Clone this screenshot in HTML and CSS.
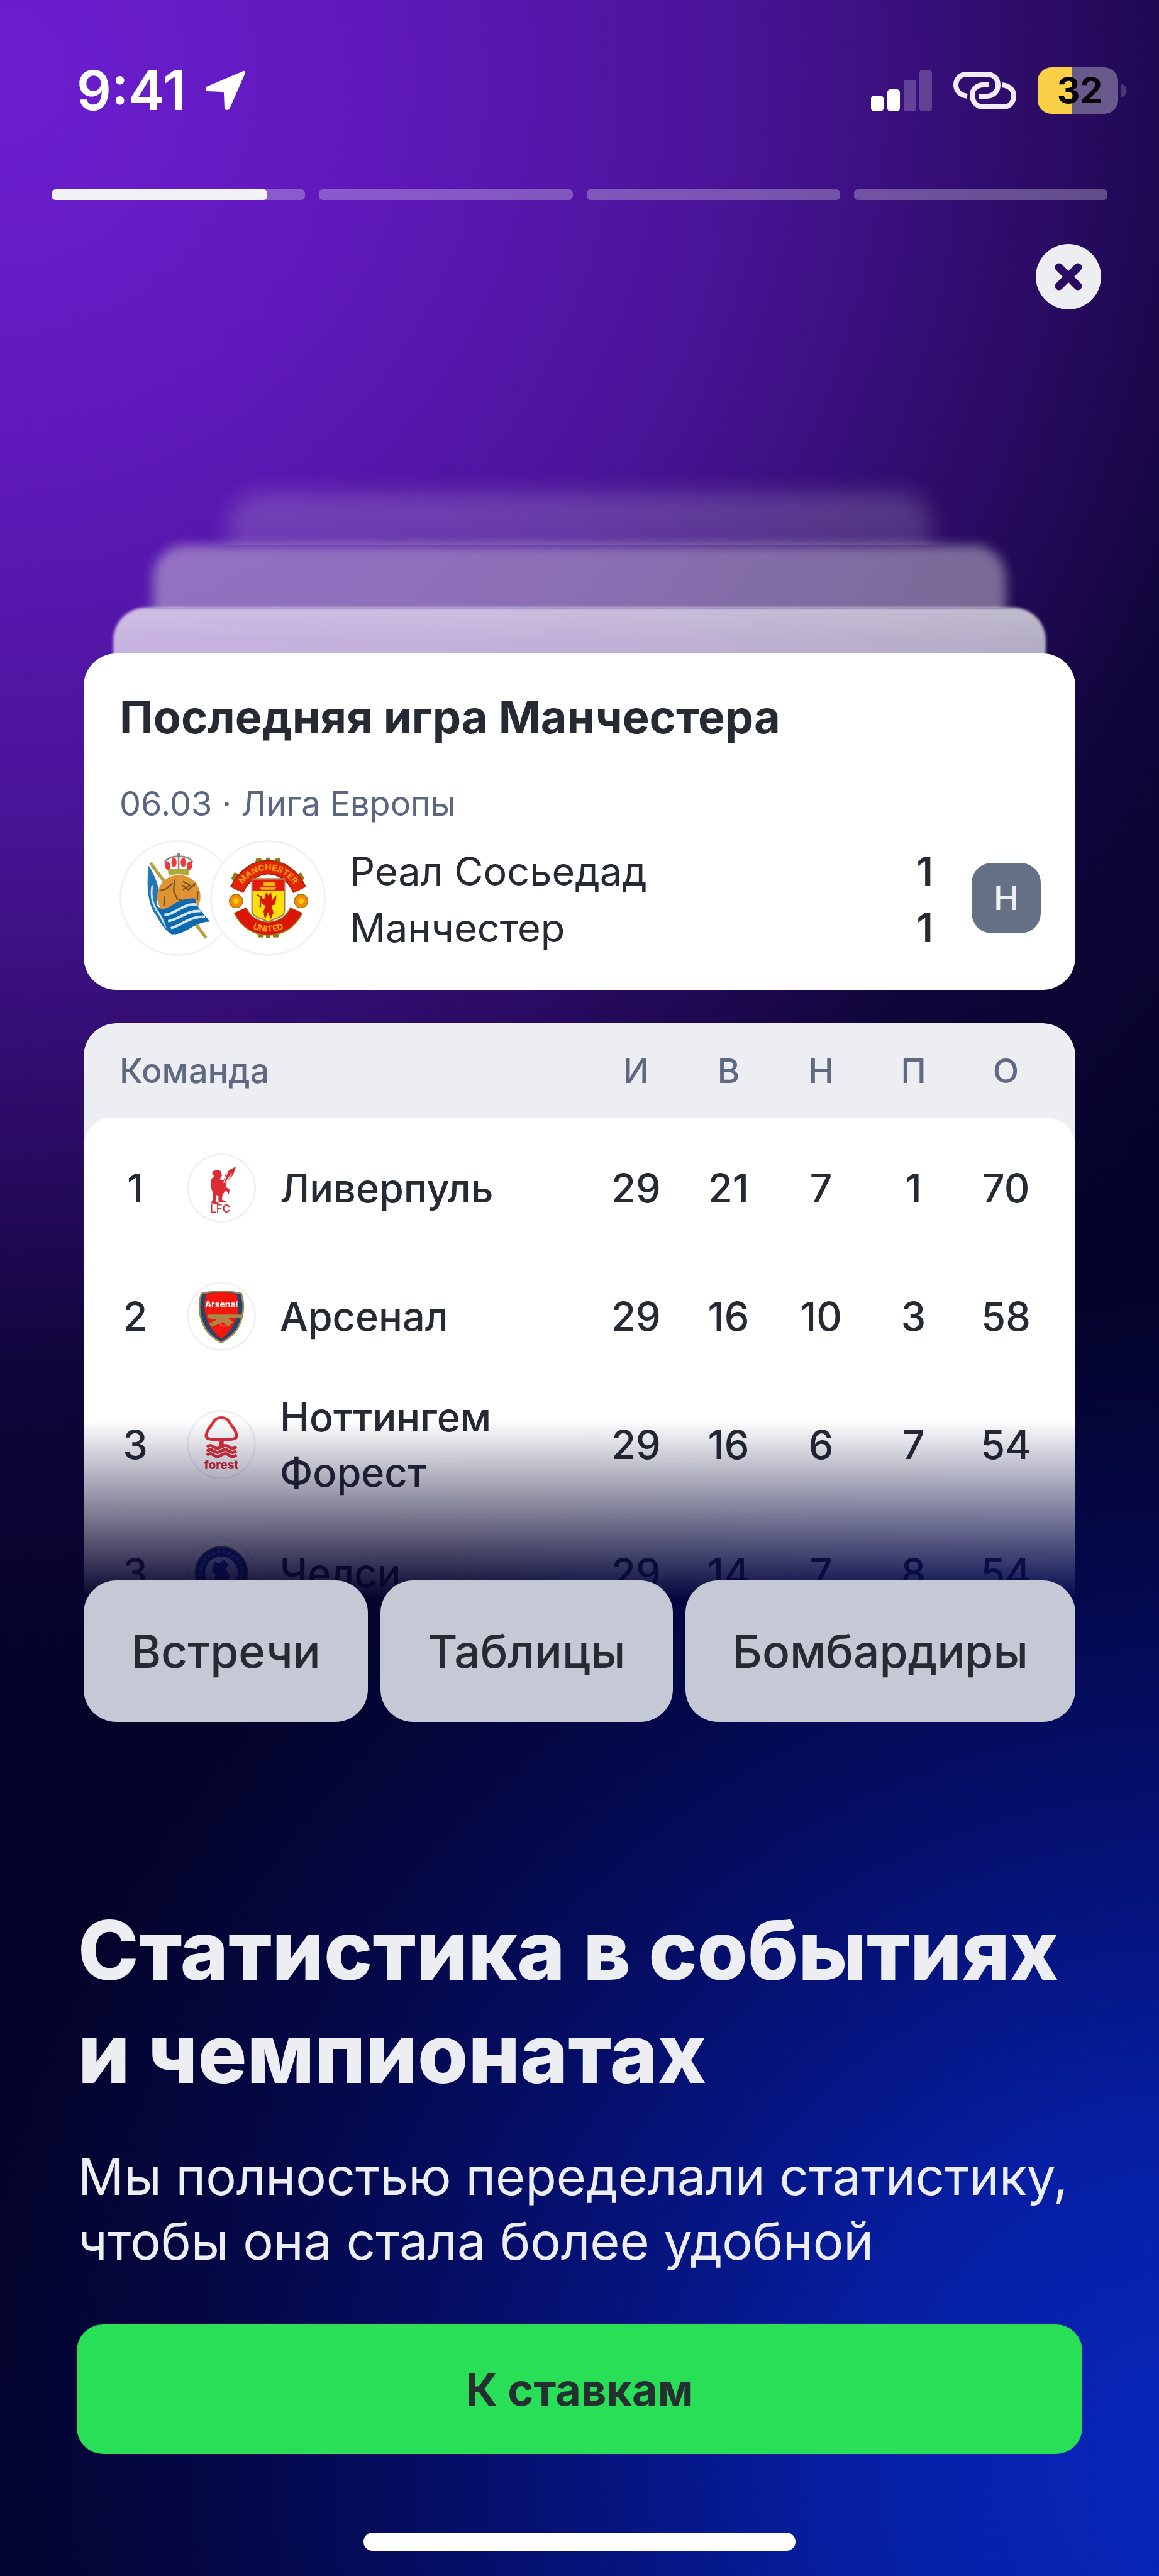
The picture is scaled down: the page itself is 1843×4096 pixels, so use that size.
FILE: index.html
```
<!DOCTYPE html>
<html lang="ru">
<head>
  <meta charset="UTF-8">
  <meta name="viewport" content="width=device-width, initial-scale=1.0">
  <title>Статистика в событиях и чемпионатах</title>
  <link rel="stylesheet" href="styles.css">
</head>
<body>
<div class="story">

  <!-- Статус-бар -->
  <header class="status-bar">
    <div class="status-left">
      <span class="time">9:41</span>
      <svg class="icon-location" viewBox="0 0 66 66">
        <path d="M62 2 L3 27 Q0 31 4 34 L29 35 Q31 35 31 38 L32 62 Q36 66 40 62 L65 5 Q65 1 62 2Z" fill="#fff"/>
      </svg>
    </div>
    <div class="status-right">
      <svg class="icon-signal" viewBox="0 0 97 66" fill="#fff">
        <rect x="0" y="41" width="20" height="25" rx="5"/>
        <rect x="26" y="31" width="20" height="35" rx="5"/>
        <rect x="52" y="16" width="20" height="50" rx="5" opacity=".22"/>
        <rect x="77" y="0" width="20" height="66" rx="5" opacity=".22"/>
      </svg>
      <svg class="icon-link" viewBox="0 0 100 62" fill="none" stroke="#f1ecf8" stroke-width="8">
        <path d="M22 40 C10 38 4 31 4 22 C4 12 12 5 21 5 H53 C64 5 71 12 71 22 C71 33 63 40 53 40 H41"/>
        <path d="M57 22 H48 C37 22 30 29 30 38 C30 50 38 57 48 57 H80 C90 57 96 49 96 39 C96 30 89 23 77 22"/>
      </svg>
      <div class="battery">
        <div class="battery-body"><span>32</span></div>
        <div class="battery-cap"></div>
      </div>
    </div>
  </header>

  <div class="progress">
    <div class="segment"><div class="segment-fill" style="width: 85%"></div></div>
    <div class="segment"></div>
    <div class="segment"></div>
    <div class="segment"></div>
  </div>

  <button class="close" type="button" aria-label="Закрыть">
    <svg viewBox="0 0 104 104" stroke="#290b63" stroke-width="13" stroke-linecap="round">
      <path d="M37 37 L67 67 M67 37 L37 67"/>
    </svg>
  </button>

  <main class="cards">
    <!-- Стопка карточек позади -->
    <div class="layer layer-far"></div>
    <div class="layer layer-middle"></div>
    <div class="layer layer-near"></div>

    <section class="match">
      <h2>Последняя игра Манчестера</h2>
      <p class="match-info">06.03 · Лига Европы</p>
      <div class="match-row">
        <div class="crests">
          <!-- Реал Сосьедад -->
          <svg class="crest" viewBox="68 88 604 604">
            <path d="M225 200 L525 605" stroke="#b9a23e" stroke-width="17"/>
            <path d="M215 215 C240 255 262 300 270 345 L258 430 L320 470 L345 585 C295 570 270 500 240 460 C205 390 205 300 215 215Z" fill="#2178b8"/>
            <path d="M236 320 C222 380 235 430 275 480 M262 460 C290 500 300 540 330 570 M290 455 C320 500 315 540 340 570" fill="none" stroke="#cfe3f2" stroke-width="10"/>
            <circle cx="378" cy="382" r="117" fill="#e09332"/>
            <path d="M275 350 L310 340 L345 310 M355 290 L350 350 L372 400 M300 380 L298 430 M395 320 L430 345 L470 310 M400 300 L445 325 M400 345 L440 320 M380 400 L410 405 M480 350 L478 400" fill="none" stroke="#7b5420" stroke-width="8"/>
            <path d="M265 455 C340 450 370 385 465 392 C472 440 510 470 545 517 C450 520 420 590 340 585 C300 570 310 500 265 455Z" fill="#0e6ab0"/>
            <path d="M300 480 C360 480 400 415 475 425 M320 515 C380 505 420 455 495 460 M335 552 C400 535 430 490 520 490" fill="none" stroke="#d5e6f3" stroke-width="13"/>
            <path d="M325 270 C315 240 320 235 335 232 H420 C435 235 438 240 428 270 C395 258 355 258 325 270Z" fill="#a9ab3d"/>
            <g fill="#ee3a3a">
              <ellipse cx="318" cy="215" rx="15" ry="24" transform="rotate(-14 318 215)"/>
              <ellipse cx="352" cy="198" rx="14" ry="26"/>
              <ellipse cx="402" cy="198" rx="14" ry="26"/>
              <ellipse cx="436" cy="215" rx="15" ry="24" transform="rotate(14 436 215)"/>
            </g>
            <path d="M302 195 C330 155 425 155 452 195 M377 155 V235" fill="none" stroke="#97857a" stroke-width="9"/>
            <circle cx="377" cy="158" r="10" fill="#8d7a92"/>
          </svg>
          <!-- Манчестер -->
          <svg class="crest" viewBox="546 88 604 604">
            <g fill="#8f7a10">
              <path d="M785 176 h26 l8 26 h-40z M890 176 h26 l-4 30 h-34z M838 172 h24 v26 h-24z"/>
              <path d="M650 285 l18 -34 l28 12 l-22 42z M1045 285 l-18 -34 l-28 12 l22 42z"/>
              <path d="M795 602 h30 v-26 h-30z M875 602 h30 v-26 h-30z M838 607 h24 v-22 h-24z"/>
            </g>
            <path d="M680 346 C720 262 785 224 850 224 C915 224 980 262 1020 346" fill="none" stroke="#93210a" stroke-width="78"/>
            <path d="M681 344 C720 262 785 224 850 224 C915 224 980 262 1019 344" fill="none" stroke="#e32406" stroke-width="68"/>
            <path d="M698 455 C730 525 790 555 850 555 C910 555 970 525 1002 455" fill="none" stroke="#8f8a10" stroke-width="76"/>
            <path d="M699 456 C730 524 790 554 850 554 C910 554 970 524 1001 456" fill="none" stroke="#dc1508" stroke-width="66"/>
            <path id="arc-top" d="M694 350 C725 278 790 240 850 240 C910 240 975 278 1006 350" fill="none"/>
            <path id="arc-bottom" d="M700 500 C740 555 795 572 850 572 C905 572 960 555 1000 500" fill="none"/>
            <g fill="#ffa60a" font-family="Inter, sans-serif" font-weight="700" font-size="46" text-anchor="middle">
              <text><textPath href="#arc-top" startOffset="50%">MANCHESTER</textPath></text>
              <text><textPath href="#arc-bottom" startOffset="50%">UNITED</textPath></text>
            </g>
            <circle cx="676" cy="406" r="36" fill="#f58a07" stroke="#a87c08" stroke-width="5"/>
            <circle cx="676" cy="406" r="16" fill="#ffc60c"/>
            <circle cx="1027" cy="406" r="36" fill="#f58a07" stroke="#a87c08" stroke-width="5"/>
            <circle cx="1027" cy="406" r="16" fill="#ffc60c"/>
            <path d="M762 286 H938 V455 C938 495 890 495 850 520 C810 495 762 495 762 455Z" fill="#ffe10a" stroke="#a77860" stroke-width="7"/>
            <path d="M765 290 H935 V352 H765Z" fill="#e31b0b"/>
            <path d="M800 330 H895 L884 345 H812Z M825 305 H885 V325 H825Z" fill="#ffb60a"/>
            <path d="M838 360 L850 375 L865 360 L872 400 L895 372 L888 425 L868 430 L878 470 L862 505 L850 465 L832 505 L824 462 L836 430 L820 425 L800 378 L828 398Z" fill="#d91a05"/>
            <path d="M788 372 L812 384 L806 440" fill="none" stroke="#d91a05" stroke-width="8"/>
          </svg>
        </div>
        <div class="teams">
          <div class="team"><span>Реал Сосьедад</span><b>1</b></div>
          <div class="team"><span>Манчестер</span><b>1</b></div>
        </div>
        <span class="result">Н</span>
      </div>
    </section>

    <section class="standings">
      <table>
        <colgroup>
          <col class="col-place">
          <col>
          <col class="col-stat">
          <col class="col-stat">
          <col class="col-stat">
          <col class="col-stat">
          <col class="col-points">
        </colgroup>
        <thead>
          <tr>
            <th class="th-team" colspan="2">Команда</th>
            <th>И</th><th>В</th><th>Н</th><th>П</th><th>О</th>
          </tr>
        </thead>
        <tbody>
          <tr>
            <td>1</td>
            <td>
              <div class="club">
                <svg class="crest crest-small" viewBox="0 0 112 112" fill="#dc2b33">
                  <path d="M81 19 L76 34 L66 44 L63 54 L70 58 L69 67 L64 60 L58 67 L57 76 L66 80 L51 81 L51 69 L47 68 L46 79 L54 84 L38 82 L42 76 L42 65 L38 55 L39 40 L44 36 L40 31 L42 27 L49 25 L55 27 L57 35 L53 41 L60 43 L63 32 L70 25Z"/>
                  <path d="M67 27 L60 47 M74 31 L63 47" stroke="#fff" stroke-width="1.5"/>
                  <text x="54" y="98" font-size="18" text-anchor="middle" font-family="Inter, sans-serif">LFC</text>
                </svg>
                <span>Ливерпуль</span>
              </div>
            </td>
            <td>29</td><td>21</td><td>7</td><td>1</td><td>70</td>
          </tr>
          <tr>
            <td>2</td>
            <td>
              <div class="club">
                <svg class="crest crest-small" viewBox="0 0 112 112">
                  <path d="M22 17 C42 12 70 12 90 17 C97 38 93 60 84 76 C77 88 66 95 56 101 C46 95 35 88 28 76 C19 60 15 38 22 17Z" fill="#26446f" stroke="#a08a4c" stroke-width="3"/>
                  <path d="M30 18 C46 14 66 14 82 18 C88 40 84 56 77 70 C71 81 63 90 56 95 C49 90 41 81 35 70 C28 56 24 40 30 18Z" fill="#f3160a"/>
                  <text x="56" y="41" font-size="15" font-weight="700" fill="#fff" text-anchor="middle" font-family="Inter, sans-serif">Arsenal</text>
                  <path d="M32 53 H90 V59 H68 L76 66 L68 74 L58 66 L40 74 L34 69 L48 62 L32 59Z" fill="#a88a45"/>
                  <circle cx="60" cy="66" r="7" fill="none" stroke="#e7644c" stroke-width="2"/>
                </svg>
                <span>Арсенал</span>
              </div>
            </td>
            <td>29</td><td>16</td><td>10</td><td>3</td><td>58</td>
          </tr>
          <tr>
            <td>3</td>
            <td>
              <div class="club">
                <svg class="crest crest-small" viewBox="0 0 112 112" fill="none" stroke="#e3323a">
                  <path d="M56 10 C46 10 43 16 39 23 C34 28 31 33 30 40 C29 46 36 47 41 47 H71 C76 47 83 46 82 40 C81 33 78 28 73 23 C69 16 66 10 56 10Z" stroke-width="5"/>
                  <path d="M56 47 V62" stroke-width="8"/>
                  <path d="M31 60 Q37 55 43 60 T56 60 T69 60 T82 60 M31 67 Q37 62 43 67 T56 67 T69 67 T82 67 M31 74 Q37 69 43 74 T56 74 T69 74 T82 74" stroke-width="5"/>
                  <text x="56" y="98" font-size="20" font-weight="800" fill="#d92a38" stroke="none" text-anchor="middle" font-family="Inter, sans-serif">forest</text>
                </svg>
                <span>Ноттингем Форест</span>
              </div>
            </td>
            <td>29</td><td>16</td><td>6</td><td>7</td><td>54</td>
          </tr>
          <tr>
            <td>3</td>
            <td>
              <div class="club">
                <svg class="crest crest-small" viewBox="0 0 112 112">
                  <circle cx="56" cy="56" r="45" fill="#0b2d8c" stroke="#8a7b3c" stroke-width="2"/>
                  <circle cx="56" cy="56" r="28" fill="#b9c4ea"/>
                  <circle cx="56" cy="56" r="36" fill="none" stroke="#4a5fae" stroke-width="5" stroke-dasharray="5 4"/>
                  <path d="M44 36 L52 40 L60 34 L68 42 L64 50 L70 60 L68 76 H60 L56 64 L50 76 H42 L46 60 L40 52Z" fill="#0b2d8c"/>
                </svg>
                <span>Челси</span>
              </div>
            </td>
            <td>29</td><td>14</td><td>7</td><td>8</td><td>54</td>
          </tr>
        </tbody>
      </table>
    </section>

    <nav class="tabs">
      <button type="button">Встречи</button>
      <button type="button">Таблицы</button>
      <button type="button">Бомбардиры</button>
    </nav>
  </main>

  <section class="promo">
    <h1>Статистика в событиях<br>и чемпионатах</h1>
    <p>Мы полностью переделали статистику,<br>чтобы она стала более удобной</p>
  </section>

  <button class="cta" type="button">К ставкам</button>

  <div class="home-indicator"></div>
</div>
</body>
</html>
```
FILE: styles.css
```
* {
  box-sizing: border-box;
}

body {
  margin: 0;
  font-family: Inter, "Noto Sans", sans-serif;
  color: #262b33;
}

h1, h2, p {
  margin: 0;
}

button {
  border: none;
  font-family: inherit;
  cursor: pointer;
}

.story {
  display: flex;
  flex-direction: column;
  min-height: 100vh;
  overflow: hidden;
  background:
    radial-gradient(124% 56% at 0% 3%, #6c1fd0 0%, #6019bc 25%, #4a1499 50%, #2a0b63 74%, rgba(20, 7, 64, 0.7) 90%, rgba(6, 4, 44, 0) 110%),
    radial-gradient(108% 46% at 104% 96%, #0727bc 0%, #061fa4 28%, #051070 55%, #040848 78%, rgba(4, 4, 42, 0) 100%),
    #04032a;
}

/* Статус-бар */
.status-bar {
  display: flex;
  justify-content: space-between;
  padding: 97px 52px 0 122px;
}

.status-left,
.status-right {
  display: flex;
  align-items: center;
  gap: 34px;
  height: 94px;
}

.status-left {
  gap: 30px;
}

.time {
  font-size: 86px;
  font-weight: 600;
  line-height: 94px;
  color: #fff;
}

.icon-location {
  width: 66px;
  height: 66px;
}

.icon-signal {
  width: 97px;
  height: 66px;
}

.icon-link {
  width: 100px;
  height: 62px;
}

.battery {
  display: flex;
  align-items: center;
  gap: 5px;
}

.battery-body {
  width: 128px;
  height: 74px;
  padding-left: 6px;
  border-radius: 22px;
  background: linear-gradient(to right, #fad046 42%, #685a8b 42%);
  font-size: 57px;
  font-weight: 700;
  line-height: 74px;
  text-align: center;
  color: #07060c;
}

.battery-cap {
  width: 8px;
  height: 20px;
  border-radius: 0 8px 8px 0;
  background: #4a3874;
}

/* Прогресс истории */
.progress {
  display: flex;
  gap: 22px;
  margin-top: 110px;
  padding: 0 82px;
}

.segment {
  flex: 1;
  height: 17px;
  border-radius: 6px;
  background: rgba(237, 238, 242, 0.3);
  overflow: hidden;
}

.segment-fill {
  height: 100%;
  border-radius: 6px;
  background: #f1f2f5;
}

.close {
  align-self: flex-end;
  width: 104px;
  height: 104px;
  margin: 70px 92px 0 0;
  padding: 0;
  border-radius: 50%;
  background: #edeef2;
}

.close svg {
  display: block;
}

/* Карточки */
.cards {
  display: flex;
  flex-direction: column;
  margin-top: 293px;
  padding: 0 133px;
}

/* нижние 60px слоя срезаны и уходят под следующий */
.layer {
  align-self: center;
  margin-bottom: -60px;
  border-radius: 52px 52px 0 0;
  clip-path: inset(-80px -80px 60px -80px);
}

.layer-far {
  width: 71%;
  height: 142px;
  background: linear-gradient(rgba(220, 220, 220, 0.24), rgba(220, 220, 220, 0.17) 60%);
  filter: blur(18px);
}

.layer-middle {
  width: 86%;
  height: 159px;
  background: rgba(220, 220, 220, 0.46);
  filter: blur(9px);
}

.layer-near {
  width: 94%;
  height: 133px;
  background: linear-gradient(rgba(245, 245, 245, 0.76), rgba(250, 250, 250, 0.69) 40%);
  filter: blur(2px);
}

.match {
  position: relative;
  padding: 57px 55px 54px 57px;
  border-radius: 52px;
  background: #fff;
}

.match h2 {
  font-size: 72px;
  font-weight: 700;
  line-height: 88px;
}

.match-info {
  margin-top: 60px;
  font-size: 54px;
  line-height: 68px;
  color: #5b6680;
}

.match-row {
  display: flex;
  align-items: center;
  margin-top: 24px;
}

.crests {
  display: flex;
}

.crest {
  flex: none;
  width: 184px;
  height: 184px;
  border: 3px solid #eff1f5;
  border-radius: 50%;
  background: #fff;
}

.crest + .crest {
  margin-left: -40px;
}

.crest-small {
  width: 110px;
  height: 110px;
}

.teams {
  flex: 1;
  margin: 0 61px 0 38px;
  padding-top: 4px;
}

.team {
  display: flex;
  justify-content: space-between;
  font-size: 63px;
  line-height: 90px;
}

.team b {
  font-weight: 600;
}

.result {
  width: 110px;
  height: 112px;
  border-radius: 32px;
  background: #677185;
  font-size: 54px;
  font-weight: 500;
  line-height: 112px;
  text-align: center;
  color: #edeef2;
}

/* Таблица */
.standings {
  margin-top: 53px;
  border-radius: 52px 52px 0 0;
  background: #edeef2;
  overflow: hidden;
  -webkit-mask-image: linear-gradient(#000 632px, transparent 915px);
  mask-image: linear-gradient(#000 632px, transparent 915px);
}

table {
  width: 100%;
  table-layout: fixed;
  border-collapse: separate;
  border-spacing: 0;
}

.col-place {
  width: 164px;
}

.col-stat {
  width: 147px;
}

.col-points {
  width: 184px;
}

th {
  height: 150px;
  padding: 0;
  font-size: 54px;
  font-weight: 500;
  color: #5f6a82;
}

.th-team {
  padding-left: 57px;
  text-align: left;
}

td {
  height: 204px;
  padding: 0;
  background: #fff;
  font-size: 63px;
  font-weight: 500;
  line-height: 88px;
  text-align: center;
}

th:last-child,
td:last-child {
  padding-right: 37px;
}

tbody tr:first-child td {
  height: 214px;
  padding-top: 10px;
}

tbody tr:first-child td:first-child {
  border-top-left-radius: 46px;
}

tbody tr:first-child td:last-child {
  border-top-right-radius: 46px;
}

.club {
  display: flex;
  align-items: center;
  gap: 38px;
  text-align: left;
}

/* Вкладки поверх нижнего края таблицы */
.tabs {
  position: relative;
  display: flex;
  gap: 20px;
  margin-top: -90px;
}

.tabs button {
  flex: 1 1 auto;
  height: 225px;
  padding: 0;
  border-radius: 52px;
  background: #c5c9d6;
  font-size: 73px;
  font-weight: 500;
  color: #262b33;
}

/* Текст */
.promo {
  margin-top: 281px;
  padding: 0 122px 0 124px;
  color: #edeef2;
}

.promo h1 {
  font-size: 130px;
  font-weight: 800;
  line-height: 164px;
}

.promo p {
  margin-top: 63px;
  font-size: 81px;
  line-height: 103px;
}

.cta {
  height: 206px;
  margin: 80px 122px 0;
  border-radius: 42px;
  background: #28df57;
  font-size: 70px;
  font-weight: 700;
  color: #23302f;
}

.home-indicator {
  align-self: center;
  width: 687px;
  height: 29px;
  margin: 125px 0 39px;
  border-radius: 15px;
  background: #fff;
}
```
